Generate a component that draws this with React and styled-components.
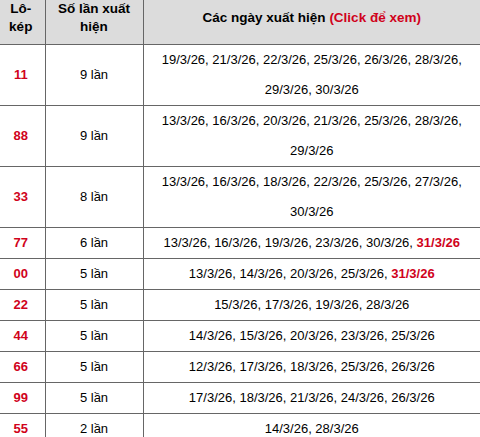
import React from "react";
import styled, { createGlobalStyle } from "styled-components";

const GlobalStyle = createGlobalStyle`
  body {
    margin: 0;
    background: #fff;
    font-family: "Liberation Sans", Arial, sans-serif;
  }
`;

const rows = [
  { num: "11", count: 9, dates: ["19/3/26", "21/3/26", "22/3/26", "25/3/26", "26/3/26", "28/3/26", "29/3/26", "30/3/26"] },
  { num: "88", count: 9, dates: ["13/3/26", "16/3/26", "20/3/26", "21/3/26", "25/3/26", "28/3/26", "29/3/26"] },
  { num: "33", count: 8, dates: ["13/3/26", "16/3/26", "18/3/26", "22/3/26", "25/3/26", "27/3/26", "30/3/26"] },
  { num: "77", count: 6, dates: ["13/3/26", "16/3/26", "19/3/26", "23/3/26", "30/3/26", "31/3/26"] },
  { num: "00", count: 5, dates: ["13/3/26", "14/3/26", "20/3/26", "25/3/26", "31/3/26"] },
  { num: "22", count: 5, dates: ["15/3/26", "17/3/26", "19/3/26", "28/3/26"] },
  { num: "44", count: 5, dates: ["14/3/26", "15/3/26", "20/3/26", "23/3/26", "25/3/26"] },
  { num: "66", count: 5, dates: ["12/3/26", "17/3/26", "18/3/26", "25/3/26", "26/3/26"] },
  { num: "99", count: 5, dates: ["17/3/26", "18/3/26", "21/3/26", "24/3/26", "26/3/26"] },
  { num: "55", count: 2, dates: ["14/3/26", "28/3/26"] },
];

// ngày mới nhất thì tô đỏ
const LATEST = "31/3/26";

const App = () => {
  return (
    <>
      <GlobalStyle />
      <StatTable>
        <colgroup>
          <col style={{ width: "45px" }} />
          <col style={{ width: "98px" }} />
          <col />
        </colgroup>
        <thead>
          <tr>
            <HeadCell $first>Lô-<br />kép</HeadCell>
            <HeadCell>Số lần xuất<br />hiện</HeadCell>
            <HeadCell $last>
              Các ngày xuất hiện <RedText>(Click để xem)</RedText>
            </HeadCell>
          </tr>
        </thead>
        <tbody>
          {rows.map((row) => (
            <tr key={row.num}>
              <NumCell>{row.num}</NumCell>
              <CountCell>{row.count} lần</CountCell>
              <DateCell>
                {row.dates.map((d, i) => (
                  <React.Fragment key={d}>
                    <DateLink $latest={d === LATEST}>{d}</DateLink>
                    {i < row.dates.length - 1 ? ", " : ""}
                  </React.Fragment>
                ))}
              </DateCell>
            </tr>
          ))}
        </tbody>
      </StatTable>
    </>
  );
};

const StatTable = styled.table`
  width: 480px;
  border-collapse: collapse;
  table-layout: fixed;
  font-size: 13px;
  color: #000;
`;

const HeadCell = styled.th`
  background: #dcdcdc;
  height: 33px;
  padding: 0 0 8px;
  font-size: 13.5px;
  font-weight: bold;
  line-height: 18px;
  text-align: center;
  vertical-align: middle;
  border-bottom: 1px solid #666;
  border-right: ${(p) => (p.$last ? "none" : "1px solid #666")};
  padding-right: ${(p) => (p.$first ? "3px" : "0")};
`;

const RedText = styled.span`
  color: #d0021b;
`;

const Cell = styled.td`
  padding: 0;
  line-height: 30px;
  text-align: center;
  vertical-align: middle;
  border-bottom: 1px solid #666;
`;

const NumCell = styled(Cell)`
  color: #d0021b;
  font-weight: bold;
  padding-right: 3px;
  border-right: 1px solid #666;
`;

const CountCell = styled(Cell)`
  border-right: 1px solid #666;
`;

const DateCell = styled(Cell)``;

const DateLink = styled.span`
  color: ${(p) => (p.$latest ? "#d0021b" : "#000")};
  font-weight: ${(p) => (p.$latest ? "bold" : "normal")};
  cursor: pointer;
`;

export default App;
